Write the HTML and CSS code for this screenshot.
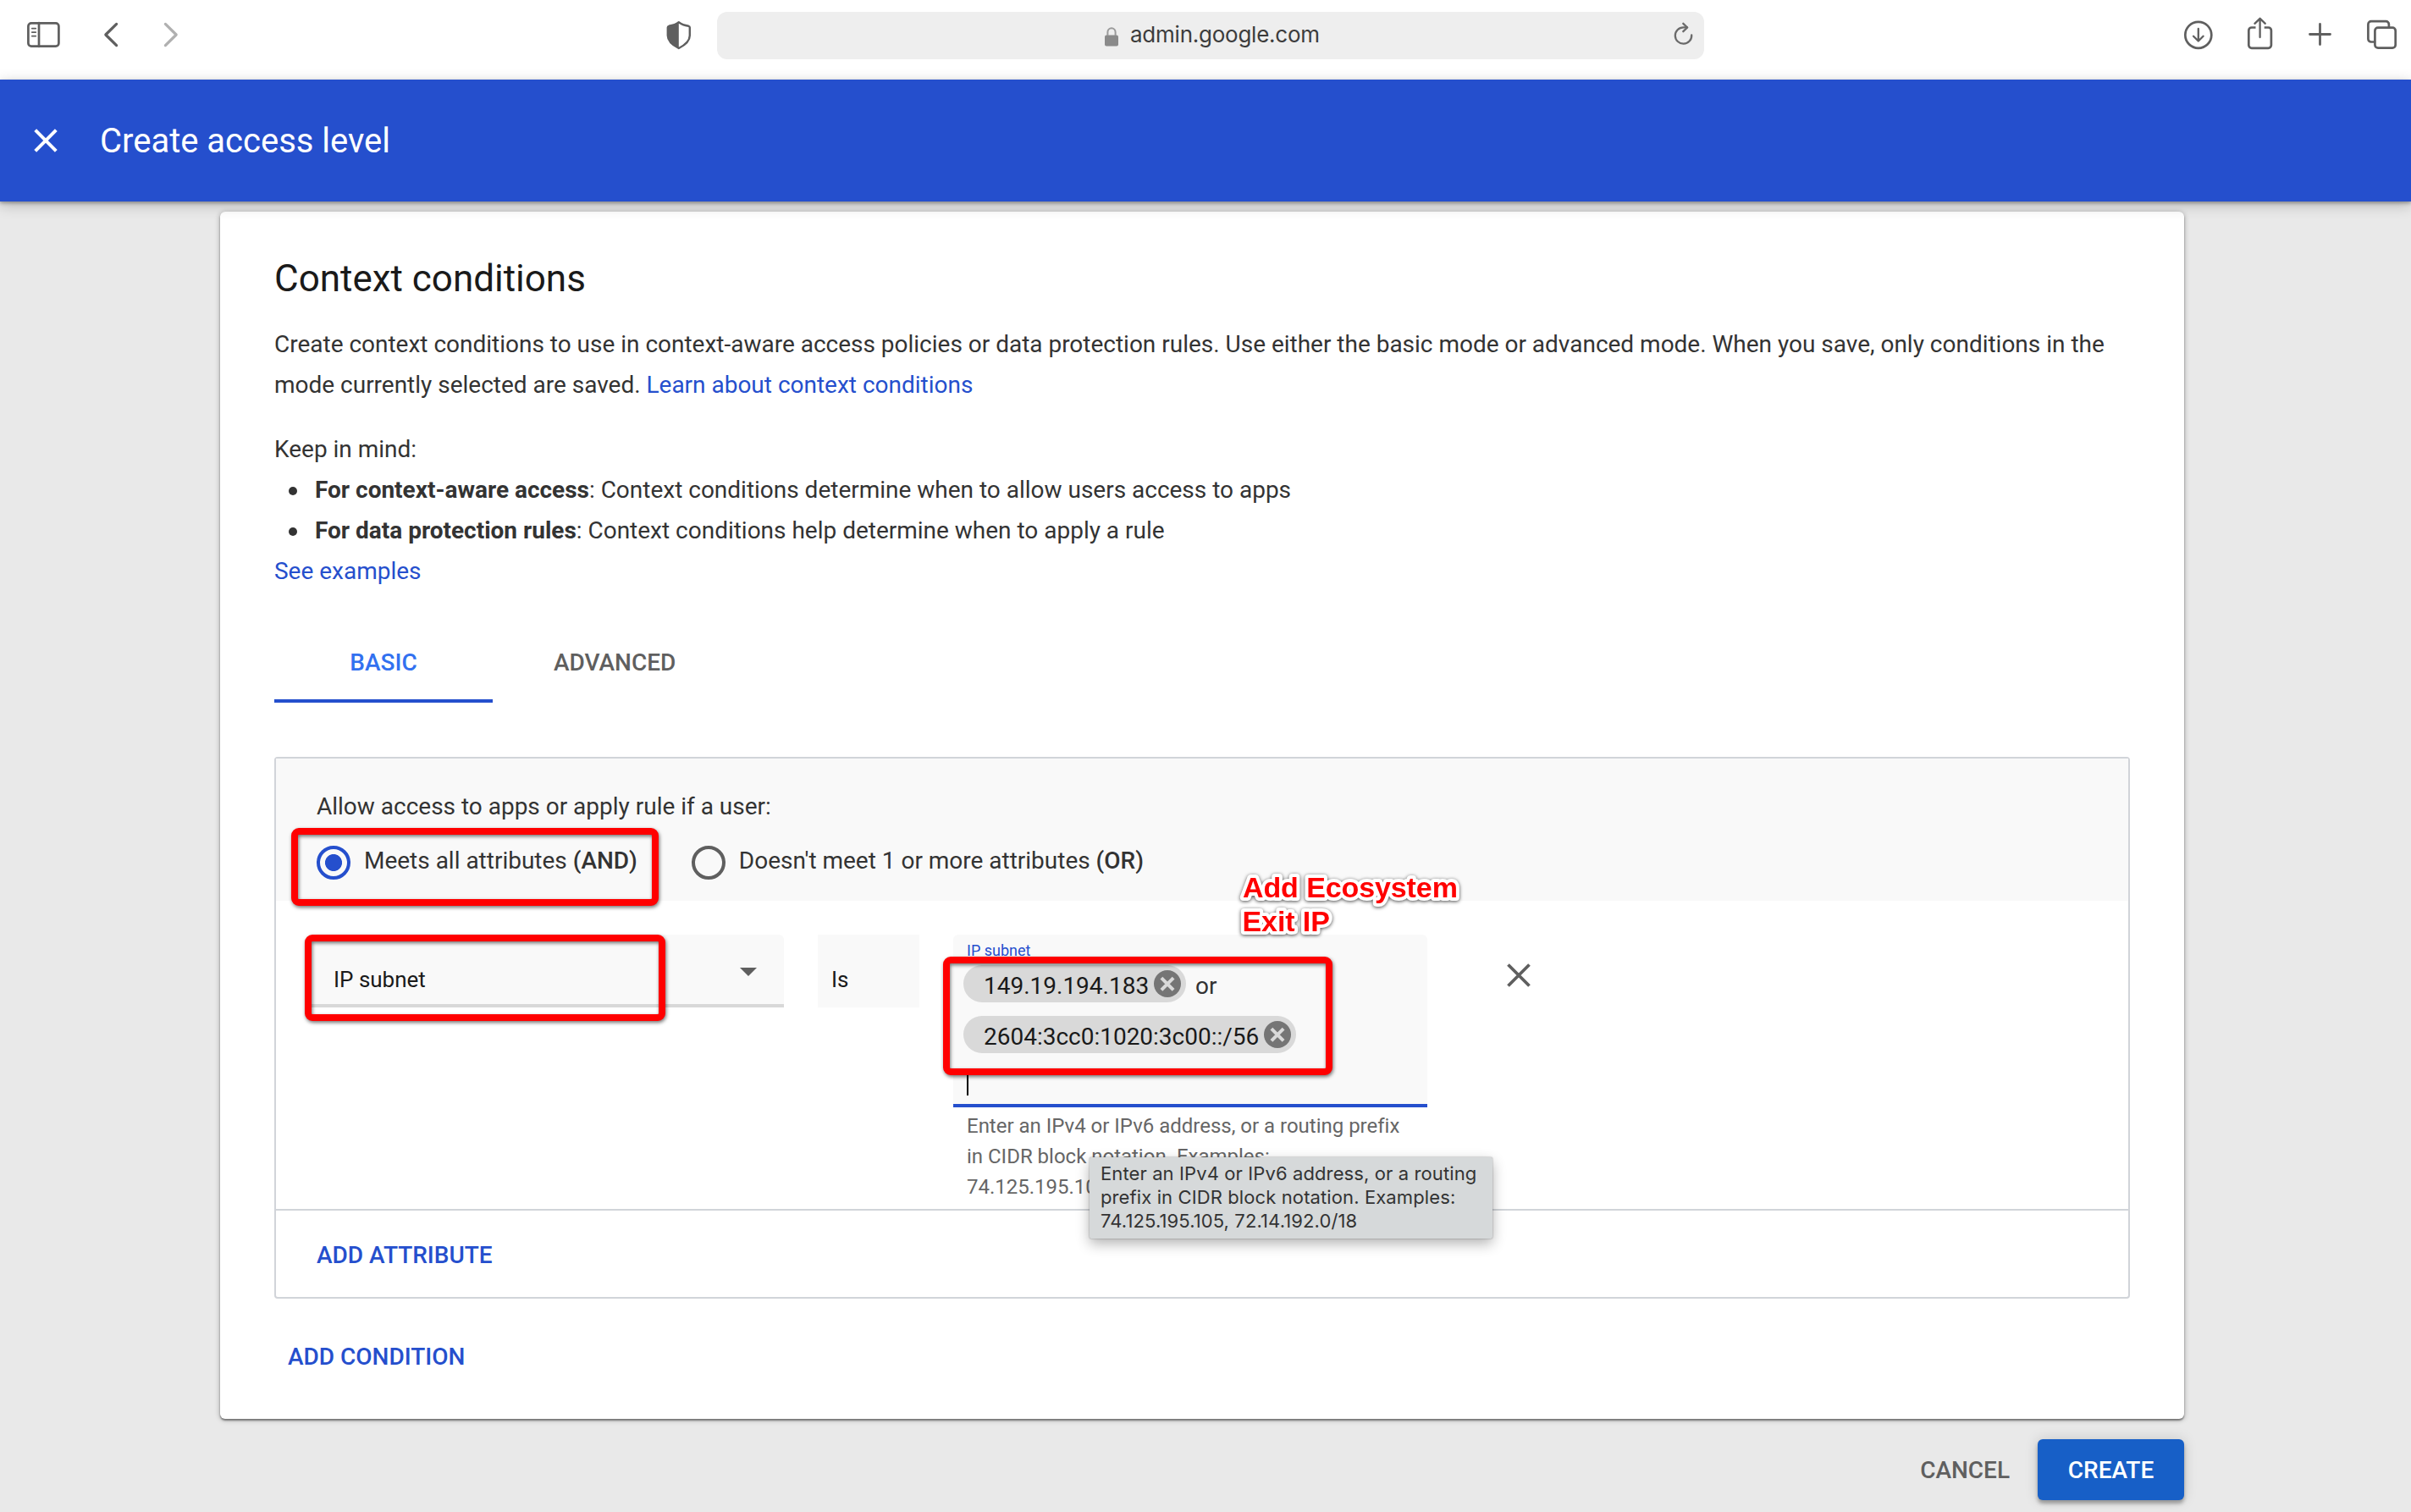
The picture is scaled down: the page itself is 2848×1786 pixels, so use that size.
FILE: index.html
```html
<!DOCTYPE html>
<html lang="en">
<head>
<meta charset="utf-8">
<title>Create access level</title>
<link rel="stylesheet" href="styles.css">
</head>
<body>
<div class="window">
  <div class="toolbar">
    <div class="nav-icons">
      <svg class="icon" width="44" height="84" viewBox="0 0 44 84"><rect x="3.4" y="27.4" width="36" height="27.2" rx="3.6"/><path d="M16 27v28"/><path d="M7.8 33.6h4.4M7.8 38.1h4.4M7.8 42.6h4.4" stroke-width="1.8"/></svg>
      <svg class="icon back" width="22" height="84" viewBox="0 0 22 84"><path d="M17.6 28.4 4.8 41 17.6 53.6" stroke-width="3.2"/></svg>
      <svg class="icon forward" width="22" height="84" viewBox="0 0 22 84"><path d="M3.4 28.4 16.2 41 3.4 53.6" stroke-width="3.2"/></svg>
    </div>
    <svg class="icon shield" width="32" height="84" viewBox="0 0 32 84"><path d="M15.8 26.2c3 2.4 7 3.8 11.600 4.600.9.2 1.400.9 1.400 1.800V42c0 6.800-5.600 11.200-13 15-7.400-3.800-13-8.200-13-15v-9.400c0-.9.5-1.600 1.400-1.800 4.600-.8 8.600-2.200 11.600-4.600z" stroke-width="2.400"/><path class="solid" d="M15.800 26.200V57c-7.400-3.800-13-8.200-13-15v-9.400c0-.9.5-1.600 1.400-1.800 4.600-.8 8.600-2.200 11.600-4.600z"/></svg>
    <div class="address">
      <svg class="lock" width="18" height="24" viewBox="0 0 18 24"><rect class="lock-body" x="1" y="10.500" width="16" height="13" rx="2"/><path d="M4.400 11V7a4.600 4.800 0 0 1 9.200 0v4" fill="none" stroke="#9a9a9a" stroke-width="2"/></svg>
      <span class="url">admin.google.com</span>
      <svg class="icon reload" width="26" height="56" viewBox="0 0 26 56"><path d="M23.200 27.500a9.700 9.700 0 1 1-9.700-9.200h4.500"/><path d="M13.300 13.800l4.900 4.700-4.900 4.700"/></svg>
    </div>
    <div class="action-icons">
      <svg class="icon" width="38" height="84" viewBox="0 0 38 84"><circle cx="18.800" cy="41.300" r="15.500"/><path d="M18.800 34v14.500M13 42.800l5.800 5.700 5.800-5.700" stroke-width="2.300"/></svg>
      <svg class="icon" width="34" height="84" viewBox="0 0 34 84"><path d="M11.500 32.500H6.800A3.500 3.500 0 0 0 3.300 36v17.300a3.500 3.500 0 0 0 3.500 3.500h19.600a3.500 3.500 0 0 0 3.500-3.500V36a3.500 3.500 0 0 0-3.500-3.500h-4.700" stroke-linecap="butt"/><path d="M16.600 44V22.400M10.400 27.800l6.200-6 6.200 6" stroke-width="2.300"/></svg>
      <svg class="icon" width="32" height="84" viewBox="0 0 32 84"><path d="M3.500 40.500h24M15.500 28.500v24" stroke-width="2.800"/></svg>
      <svg class="icon" width="40" height="84" viewBox="0 0 40 84"><path d="M11 49.500H7a3.600 3.600 0 0 1-3.600-3.600V28.700A3.600 3.600 0 0 1 7 25.100h17.300a3.600 3.600 0 0 1 3.600 3.600v3"/><rect x="11.400" y="32.600" width="24.300" height="24.100" rx="3.600"/></svg>
    </div>
  </div>

  <header class="header">
    <svg width="28" height="28" viewBox="0 0 28 28"><path d="M1.700 1.700l24.600 24.600M26.300 1.700 1.700 26.300" stroke="#fff" stroke-width="4"/></svg>
    <h1>Create access level</h1>
  </header>

  <main class="page">
    <section class="card">
      <h2>Context conditions</h2>
      <p class="intro">Create context conditions to use in context-aware access policies or data protection rules. Use either the basic mode or advanced mode. When you save, only conditions in the mode currently selected are saved. <a>Learn about context conditions</a></p>
      <p>Keep in mind:</p>
      <ul>
        <li><b>For context-aware access</b>: Context conditions determine when to allow users access to apps</li>
        <li><b>For data protection rules</b>: Context conditions help determine when to apply a rule</li>
      </ul>
      <p><a>See examples</a></p>

      <div class="tabs">
        <div class="tab active">BASIC</div>
        <div class="tab">ADVANCED</div>
      </div>

      <div class="condition">
        <div class="rule">
          <div class="rule-title">Allow access to apps or apply rule if a user:</div>
          <div class="radios">
            <div class="option"><span class="radio checked"></span><span class="option-text">Meets all attributes <strong>(AND)</strong></span></div>
            <div class="option"><span class="radio"></span><span class="option-text">Doesn't meet 1 or more attributes <strong>(OR)</strong></span></div>
          </div>
        </div>
        <div class="attribute">
          <div class="select"><span>IP subnet</span><span class="arrow"></span></div>
          <div class="operator">Is</div>
          <div class="value">
            <div class="field">
              <div class="label">IP subnet</div>
              <div class="chip-row">
                <div class="chip"><span>149.19.194.183</span><svg width="32" height="32" viewBox="0 0 32 32"><circle cx="16" cy="16" r="16" fill="#757575"/><path d="M8.900 9.200l14.200 14.200M23.100 9.200 8.900 23.400" stroke="#d9d9d9" stroke-width="4"/></svg></div>
                <span class="or">or</span>
              </div>
              <div class="chip-row">
                <div class="chip"><span>2604:3cc0:1020:3c00::/56</span><svg width="32" height="32" viewBox="0 0 32 32"><circle cx="16" cy="16" r="16" fill="#757575"/><path d="M8.900 9.200l14.200 14.200M23.100 9.200 8.900 23.400" stroke="#d9d9d9" stroke-width="4"/></svg></div>
              </div>
              <div class="caret"></div>
            </div>
            <div class="help">Enter an IPv4 or IPv6 address, or a routing prefix<br>in CIDR block notation. Examples:<br>74.125.195.105, 72.14.192.0/18</div>
          </div>
          <svg class="remove" width="28" height="28" viewBox="0 0 28 28"><path d="M1.500 1.500l25 25M26.500 1.500l-25 25" stroke="#5f5f5f" stroke-width="3.800"/></svg>
        </div>
        <div class="add-attribute">ADD ATTRIBUTE</div>
      </div>
      <div class="add-condition">ADD CONDITION</div>
    </section>
    <footer class="actions">
      <div class="cancel">CANCEL</div>
      <div class="create">CREATE</div>
    </footer>
  </main>

  <div class="mark mark-mode"></div>
  <div class="mark mark-attribute"></div>
  <div class="mark mark-values"></div>
  <svg class="note" width="290" height="100" viewBox="0 0 290 100"><text x="18" y="40">Add Ecosystem</text><text x="17.500" y="80">Exit IP</text></svg>
  <div class="tooltip">Enter an IPv4 or IPv6 address, or a routing<br>prefix in CIDR block notation. Examples:<br>74.125.195.105, 72.14.192.0/18</div>
</div>
</body>
</html>
```
FILE: styles.css
```css
* { box-sizing: border-box; }
body { margin: 0; font: 28px/48px Roboto, sans-serif; letter-spacing: -0.01px; color: #333; }
h1, h2, p, ul { margin: 0; padding: 0; font-weight: 400; }
svg { display: block; flex: none; }
a { color: #254fcd; }

.window {
  position: relative;
  width: 2848px;
  height: 1786px;
  overflow: hidden;
  background: #e9e9e9;
}

/* Browser toolbar */
.toolbar { display: flex; align-items: flex-start; height: 94px; padding: 0 14px 0 30px; background: #fff; }
.icon { fill: none; stroke: #5f5f5f; stroke-width: 2.7; stroke-linecap: round; stroke-linejoin: round; }
.icon .solid { fill: #5f5f5f; stroke: none; }
.nav-icons { display: flex; width: 756px; }
.back { margin-left: 46px; }
.forward { margin-left: 50px; stroke: #b0b0b0; }
.address {
  display: flex;
  align-items: center;
  width: 1166px;
  height: 56px;
  margin: 14px 0 0 29px;
  padding: 0 12px 0 457px;
  border-radius: 12px;
  background: #eee;
}
.lock { margin-top: 1px; }
.lock-body { fill: #8a8a8a; }
.url { margin: -2px 0 0 13px; font: 26px/56px Inter, sans-serif; letter-spacing: -0.24px; color: #3c3c3c; }
.reload { margin-left: auto; stroke: #6a6a6a; stroke-width: 2.3; }
.action-icons { display: flex; gap: 37.5px; margin-left: auto; }

/* Page header */
.header {
  position: relative;
  z-index: 1;
  display: flex;
  align-items: center;
  gap: 50px;
  height: 144px;
  padding-left: 40px;
  background: #254fcd;
  box-shadow: 0 2px 4px rgba(0, 0, 0, .3), 0 4px 16px rgba(0, 0, 0, .22);
}
.header h1 { padding-top: 2px; font-size: 40px; color: #fff; }

/* Card */
.page { padding: 12px 268px 0 260px; }
.card {
  height: 1426px;
  padding: 51px 64px 0;
  border-radius: 6px;
  background: #fff;
  box-shadow: 0 2px 2px rgba(0, 0, 0, .4), 0 1px 6px rgba(0, 0, 0, .3);
}
.card h2 { font-size: 44px; line-height: 56px; color: #1a1a1a; }
.intro { width: 2180px; margin: 26px 0 28px; }
li { display: flex; align-items: center; padding-left: 17px; white-space: pre; }
li::before { content: ""; width: 10px; height: 10px; margin: 1px 21px 0 0; border-radius: 50%; background: #333; }

.tabs { display: flex; margin-top: 35px; font-weight: 500; }
.tab { height: 96px; padding: 25px 72px 0; color: #5f5f5f; }
.tab.active { width: 258px; padding: 25px 0 0; border-bottom: 4px solid #254fcd; text-align: center; color: #3271f0; }

/* Condition box */
.condition { height: 640px; margin-top: 64px; border: 2px solid #d1d4d9; border-radius: 4px; }
.rule { height: 168px; padding: 33px 48px 0; background: #f9f9f9; }
.radios { display: flex; gap: 64px; margin-top: 16px; }
.option { display: flex; gap: 16px; }
.radio { width: 40px; height: 40px; margin-top: 6px; border: 4px solid #5f5f5f; border-radius: 50%; }
.radio.checked { border-color: #254fcd; background: radial-gradient(circle, #254fcd 9.6px, transparent 10.4px); }
strong { font-weight: 500; }

.attribute { display: flex; height: 364px; padding: 40px 40px 0; font-size: 26px; color: #1a1a1a; }
.select, .operator { height: 86px; padding-top: 29px; background: #f9f9f9; }
.select {
  display: flex;
  justify-content: space-between;
  width: 560px;
  padding-left: 28px;
  padding-right: 32px;
  border-bottom: 4px solid #d8d8d8;
  border-radius: 6px 6px 0 0;
}
.arrow { width: 20px; height: 10px; margin-top: 10px; background: #5f5f5f; clip-path: polygon(0 0, 100% 0, 50% 100%); }
.operator { width: 120px; margin: 0 40px; padding-left: 16px; }
.value { width: 560px; }
.field { height: 204px; border-bottom: 4px solid #254fcd; border-radius: 6px 6px 0 0; background: #f9f9f9; }
.label { height: 36px; padding-left: 16px; font-size: 18px; line-height: 38px; color: #254fcd; }
.chip-row { display: flex; height: 60px; padding-left: 12px; font-size: 28px; line-height: 50px; }
.chip { display: flex; align-items: flex-start; gap: 6px; height: 44px; padding: 0 6px 0 24px; border-radius: 22px; background: #d9d9d9; }
.chip svg { margin-top: 6px; }
.or { margin-left: 11px; color: #333; }
.caret { width: 2px; height: 30px; margin: 4px 0 0 16px; background: #000; }
.help { padding: 4px 0 0 16px; font-size: 24px; line-height: 36px; color: #666; }
.remove { margin: 34px 0 0 94px; }
.add-attribute { height: 104px; padding: 29px 48px 0; border-top: 2px solid #d1d4d9; font-weight: 500; color: #254fcd; }
.add-condition { margin-top: 45px; padding-left: 16px; font-weight: 500; color: #254fcd; }

.actions { display: flex; justify-content: flex-end; margin-top: 24px; font-weight: 500; line-height: 74px; }
.cancel { margin-right: 33px; color: #5f5f5f; }
.create {
  width: 173px;
  height: 72px;
  border-radius: 6px;
  background: #175fc7;
  color: #fff;
  text-align: center;
  box-shadow: 0 4px 4px rgba(0, 0, 0, .3), 0 0 16px rgba(0, 0, 0, .15);
}

/* Annotations over the page */
.mark { position: absolute; border: 8px solid #f00; border-radius: 9px; filter: drop-shadow(1px 2px 2px rgba(0, 0, 0, .55)); }
.mark-mode { left: 344px; top: 978px; width: 434px; height: 92px; }
.mark-attribute { left: 360px; top: 1104px; width: 426px; height: 102px; }
.mark-values { left: 1114px; top: 1130px; width: 460px; height: 140px; }
.note { position: absolute; left: 1450px; top: 1020px; overflow: visible; filter: drop-shadow(0 1px 2px rgba(0, 0, 0, .7)); }
.note text {
  font: 700 34px "Liberation Sans", sans-serif;
  letter-spacing: -0.1px;
  fill: #f00;
  stroke: #fff;
  stroke-width: 8px;
  stroke-linejoin: round;
  paint-order: stroke;
}
.tooltip {
  position: absolute;
  left: 1287px;
  top: 1367px;
  width: 476px;
  height: 96px;
  padding: 5px 0 0 13px;
  border-radius: 2px;
  background: #d6d9da;
  box-shadow: 0 0 2px rgba(0, 0, 0, .4), 0 6px 16px rgba(0, 0, 0, .3);
  font: 22px/28px Inter, sans-serif;
  letter-spacing: 0.11px;
  color: #333;
}
```
